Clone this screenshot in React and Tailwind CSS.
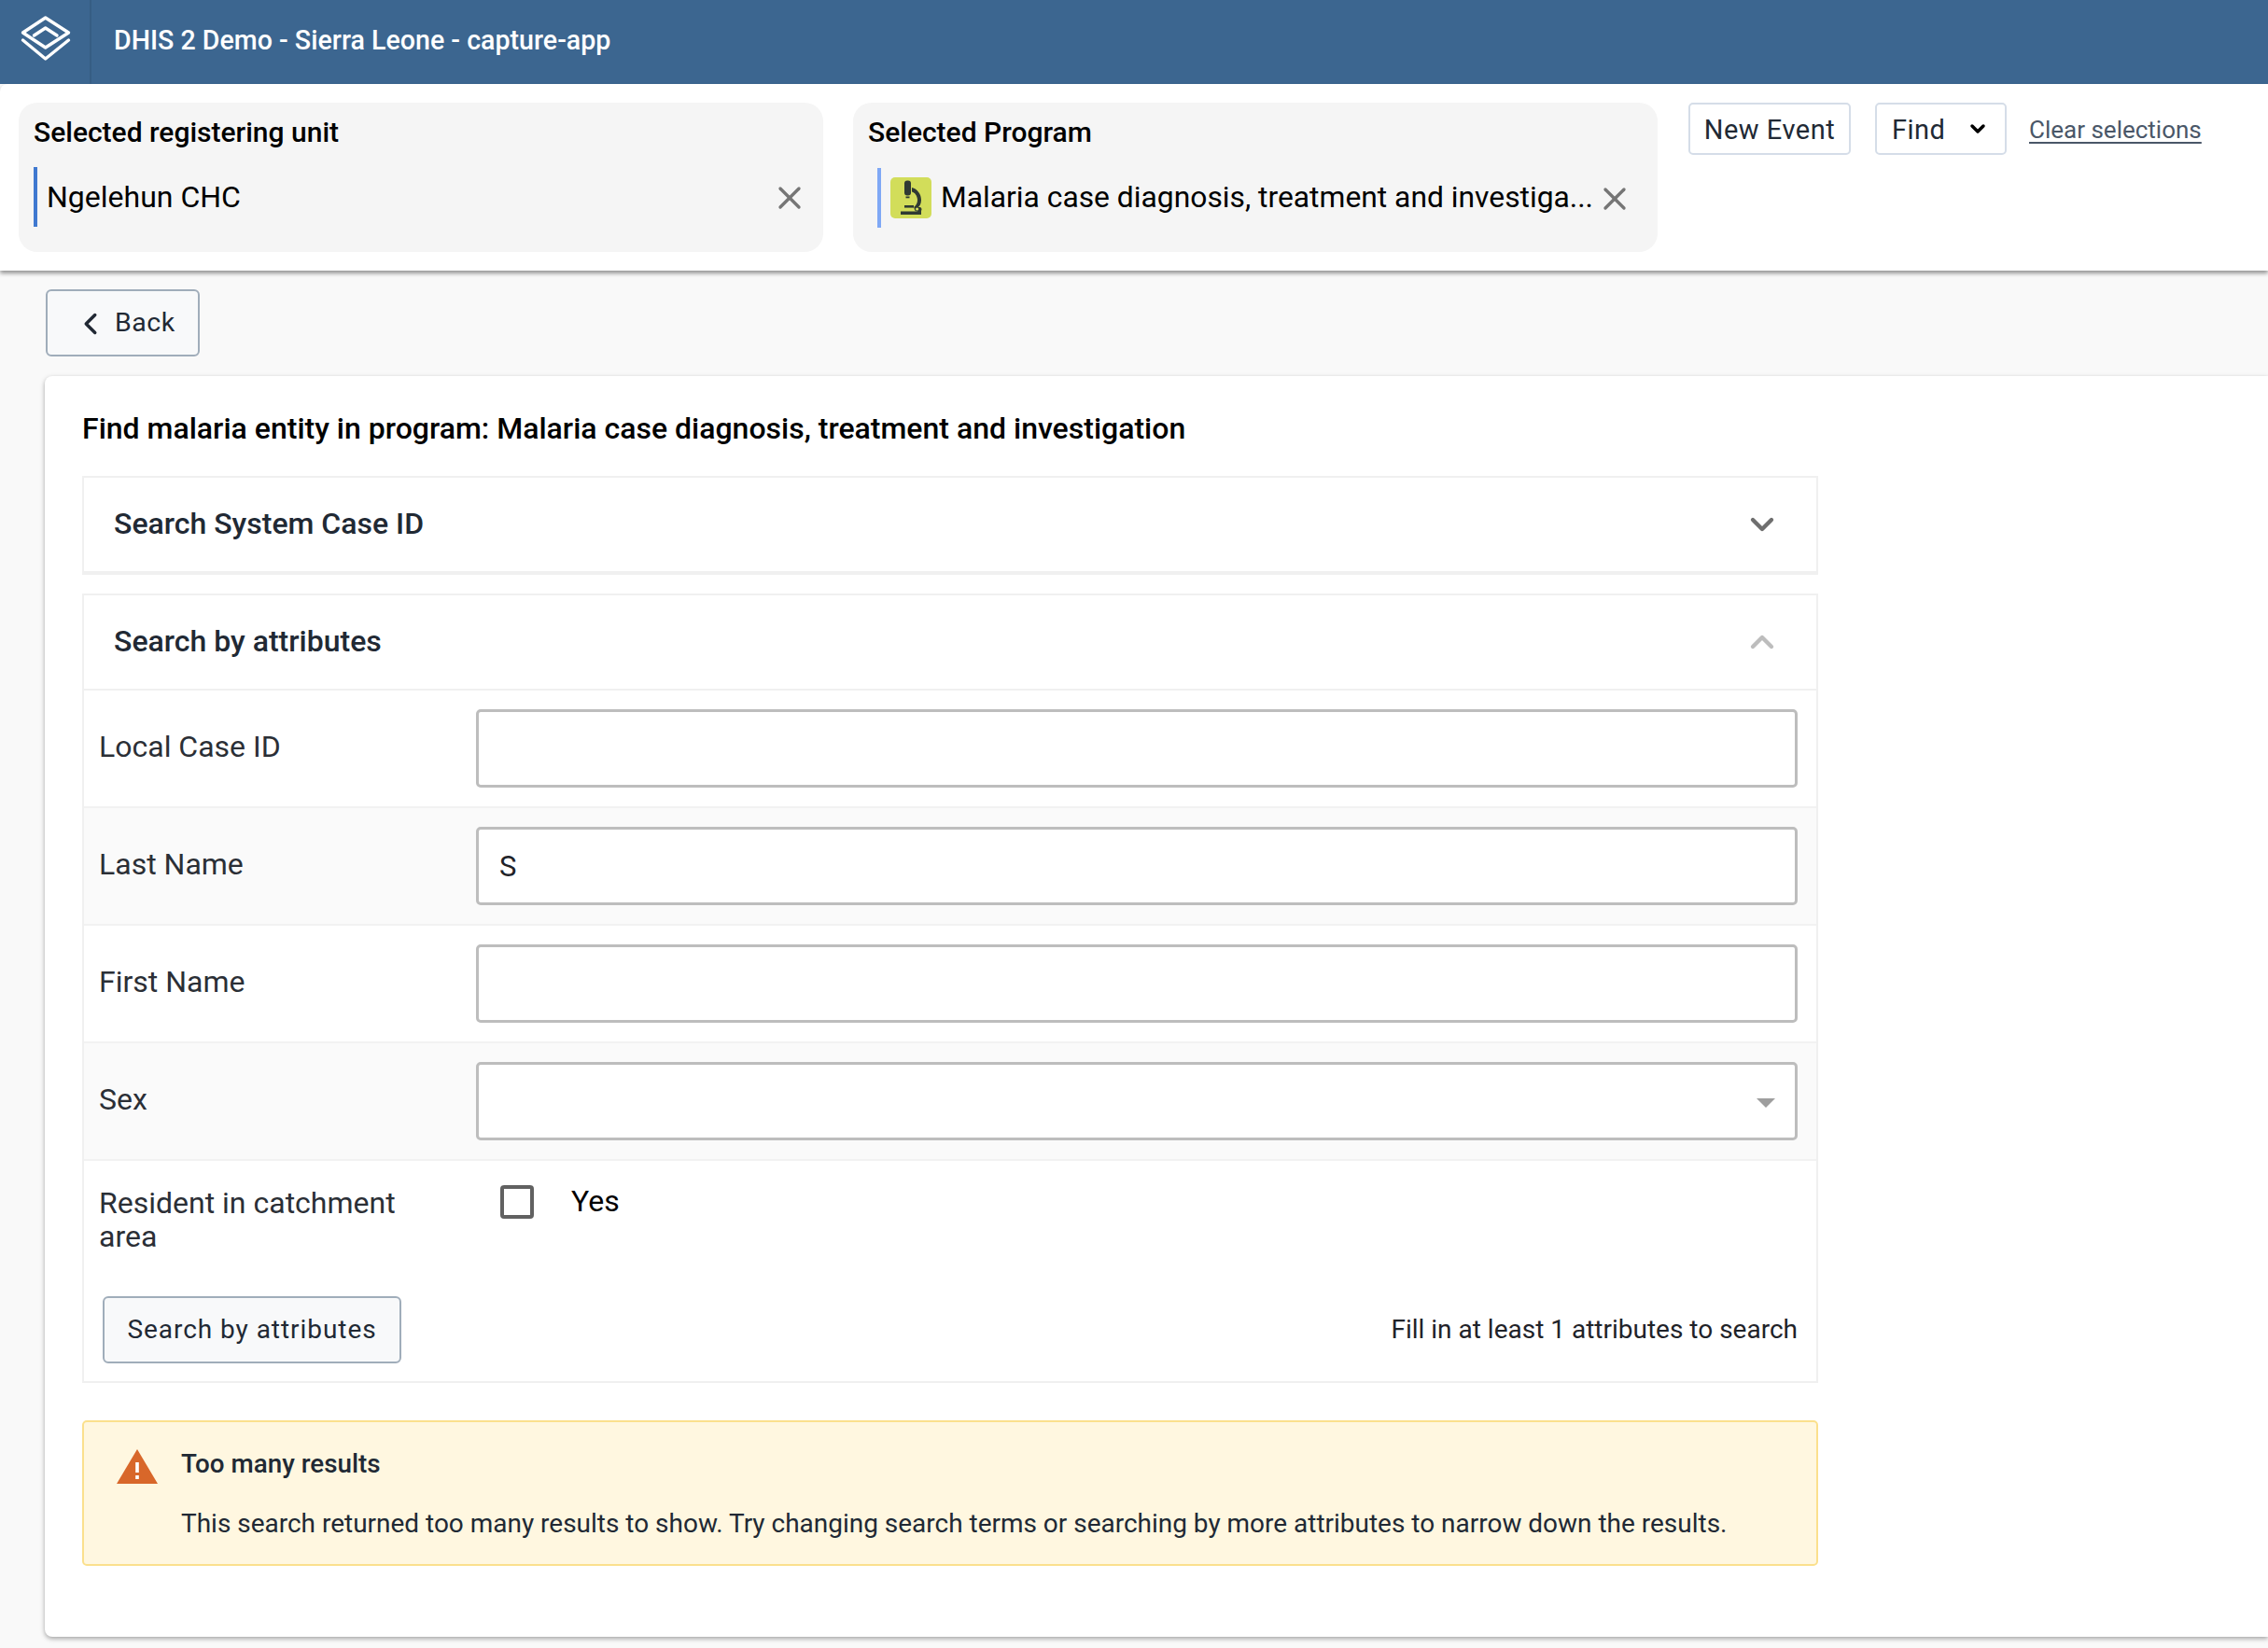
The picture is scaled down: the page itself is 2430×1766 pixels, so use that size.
import { X, ChevronLeft, ChevronDown, ChevronUp } from 'lucide-react'

function Logo() {
  return (
    <svg width="98" height="90" viewBox="0 0 98 90" fill="none" stroke="#fff" strokeWidth="3.4" strokeLinejoin="round" strokeLinecap="round">
      <path d="M48.7 19 L73.5 35 L48.7 51 L24.5 35 Z" />
      <path d="M36.5 38 L48.7 30 L61 38" />
      <path d="M24.5 43 L48.7 63 L73.5 43" />
    </svg>
  )
}

function Microscope() {
  return (
    <svg width="44" height="44" viewBox="0 0 44 44" className="rounded-[5px] bg-[#d2dd5a]">
      <rect x="15" y="3.5" width="7" height="16" rx="3" fill="#2f3a33" />
      <rect x="16.5" y="20.5" width="4" height="1.8" fill="#2f3a33" />
      <path d="M23 11 C29 12.5 33 18 33 24.5 C33 28 31.5 31 29.5 32.5 L24.5 32.5 C27.5 30.5 29.2 27.5 29 24 C28.8 20 26.5 16.5 23 15.5 Z" fill="#2f3a33" />
      <rect x="15" y="30" width="10" height="2.6" fill="#2f3a33" />
      <rect x="11" y="36.5" width="20" height="3.5" fill="#2f3a33" />
      <path d="M26 32 h6 a3 3 0 0 1 1 4 v4 h-4 v-3.5 a3 3 0 0 1 -3 -4.5 Z" fill="#2f3a33" />
      <circle cx="28.6" cy="34" r="1.6" fill="#d2dd5a" />
    </svg>
  )
}

function FieldRow({ label, shaded, children }) {
  return (
    <div className={`flex items-center h-[126px] border-b-2 border-[#f2f2f2] pl-[16px] pr-[20px] ${shaded ? 'bg-[#fafafa]' : 'bg-white'}`}>
      <label className="w-[404px] pb-[5px] text-[32px] leading-[36px] text-[#2b2f36]">{label}</label>
      {children}
    </div>
  )
}

function TextBox({ value, select }) {
  return (
    <div className="relative flex-1 h-[84px] flex items-center rounded-[5px] border-[3px] border-[#bdbdbd] bg-white px-[22px] pt-[2px] text-[31px] text-[#1f2329]">
      {value}
      {select && <span className="absolute right-[21px] top-[36px] border-x-[10px] border-t-[10px] border-x-transparent border-t-[#9e9e9e]" />}
    </div>
  )
}

export default function App() {
  return (
    <div className="min-h-[1766px] overflow-hidden bg-[#f9f9f9] font-[Roboto,sans-serif]">
      <header className="flex items-center h-[90px] bg-[#3c6690]">
        <div className="h-full w-[98px] border-r-2 border-[#365d84]">
          <Logo />
        </div>
        <span className="ml-[24px] pb-[3px] text-[28.6px] font-medium text-white">DHIS 2 Demo - Sierra Leone - capture-app</span>
      </header>

      <div className="flex items-start gap-[32px] h-[200px] rounded-tl-[8px] bg-white pl-[20px] pt-[20px] shadow-[0_3px_4px_rgba(0,0,0,0.4)]">
        <div className="w-[862px] h-[160px] rounded-[20px] bg-[#f5f5f5] px-[16px] pt-[13px]">
          <p className="text-[30px] leading-[38px] font-medium text-black">Selected registering unit</p>
          <div className="mt-[18px] flex items-center h-[64px] border-l-[4px] border-[#3f79d0]">
            <span className="ml-[10px] flex-1 text-[32px] text-black">Ngelehun CHC</span>
            <X className="mt-[1px] text-[#757575]" size={40} strokeWidth={2} />
          </div>
        </div>
        <div className="w-[862px] h-[160px] rounded-[20px] bg-[#f5f5f5] pl-[16px] pt-[13px]">
          <p className="text-[30px] leading-[38px] font-medium text-black">Selected Program</p>
          <div className="ml-[10px] mt-[19px] flex items-center h-[64px] border-l-[4.5px] border-[#7fa8f5] pl-[10px]">
            <Microscope />
            <span className="ml-[10px] text-[31.8px] text-black">Malaria case diagnosis, treatment and investiga...</span>
            <X className="ml-[3px] mt-[1px] text-[#757575]" size={40} strokeWidth={2} />
          </div>
        </div>
        <div className="ml-[1px] flex items-center gap-[26px]">
          <button className="h-[56px] w-[174px] rounded-[5px] border-2 border-[#d5dde8] bg-white pt-[3px] text-[29px] tracking-[0.5px] text-[#212934]">New Event</button>
          <button className="flex items-center justify-between h-[56px] w-[141px] rounded-[5px] border-2 border-[#d5dde8] bg-white pl-[16px] pr-[17px] text-[29px] tracking-[0.5px] text-[#212934]">
            <span className="pt-[3px]">Find</span>
            <ChevronDown className="text-black" size={24} strokeWidth={3.5} />
          </button>
          <a className="ml-[-2px] pt-[3px] text-[26px] text-[#4a5768] underline underline-offset-[4px]">Clear selections</a>
        </div>
      </div>

      <button className="ml-[49px] mt-[20px] flex items-center h-[72px] w-[165px] rounded-[6px] border-2 border-[#a0adba] bg-[#f8f9fa] pl-[27px] pt-[1px] text-[28.5px] tracking-[0.5px] text-[#212934]">
        <ChevronLeft className="mr-[7px] shrink-0" size={38} strokeWidth={2.2} />
        Back
      </button>

      <main className="ml-[48px] mt-[21px] h-[1351px] rounded-l-[8px] bg-white pl-[40px] pt-[36px] shadow-[0_2px_5px_rgba(0,0,0,0.35)]">
        <h1 className="text-[32px] leading-[40px] font-medium text-black">Find malaria entity in program: Malaria case diagnosis, treatment and investigation</h1>

        <section className="mt-[31px] w-[1860px] h-[106px] flex items-center justify-between border-2 border-b-[4px] border-[#f0f0f0] pl-[32px] pr-[38px]">
          <h2 className="pb-[2px] text-[32px] font-medium text-[#212934]">Search System Case ID</h2>
          <ChevronDown className="text-[#6e6e6e]" size={40} strokeWidth={2.6} />
        </section>

        <section className="mt-[20px] w-[1860px] border-2 border-[#f0f0f0]">
          <div className="flex items-center justify-between h-[102px] border-b-2 border-[#f0f0f0] pl-[32px] pr-[38px]">
            <h2 className="pb-[2px] text-[32px] font-medium text-[#212934]">Search by attributes</h2>
            <ChevronUp className="text-[#bdbdbd]" size={40} strokeWidth={2.6} />
          </div>
          <FieldRow label="Local Case ID"><TextBox /></FieldRow>
          <FieldRow label="Last Name" shaded><TextBox value="S" /></FieldRow>
          <FieldRow label="First Name"><TextBox /></FieldRow>
          <FieldRow label="Sex" shaded><TextBox select /></FieldRow>
          <div className="flex items-start pl-[16px] pt-[27px] h-[145px]">
            <label className="w-[350px] text-[32px] leading-[36px] text-[#2b2f36]">Resident in catchment area</label>
            <span className="ml-[80px] mt-[-1px] h-[36px] w-[36px] rounded-[4px] border-[4px] border-[#616161] bg-white" />
            <span className="ml-[40px] text-[32px] leading-[32px] text-black">Yes</span>
          </div>
          <div className="flex items-center justify-between pl-[20px] pr-[20px] pb-[19px]">
            <button className="h-[72px] w-[320px] rounded-[6px] border-2 border-[#a0adba] bg-[#f8f9fa] text-[28px] tracking-[0.95px] text-[#212934]">Search by attributes</button>
            <span className="text-[28px] text-[#1f2329]">Fill in at least 1 attributes to search</span>
          </div>
        </section>

        <div className="mt-[40px] flex w-[1860px] h-[156px] rounded-[5px] border-2 border-[#fbe08d] bg-[#fff7e0] pl-[34px] pt-[28px]">
          <svg width="46" height="40" viewBox="0 0 46 40" className="shrink-0">
            <path d="M23 1 L45 38 H1 Z" fill="#d8672a" />
            <rect x="21.2" y="15" width="3.6" height="11" fill="#fff" />
            <rect x="21.2" y="29" width="3.6" height="4" fill="#fff" />
          </svg>
          <div className="ml-[24px]">
            <p className="text-[27.8px] leading-[34px] font-medium text-[#212934]">Too many results</p>
            <p className="mt-[30px] text-[27.97px] leading-[34px] text-[#212934]">This search returned too many results to show. Try changing search terms or searching by more attributes to narrow down the results.</p>
          </div>
        </div>
      </main>
    </div>
  )
}
